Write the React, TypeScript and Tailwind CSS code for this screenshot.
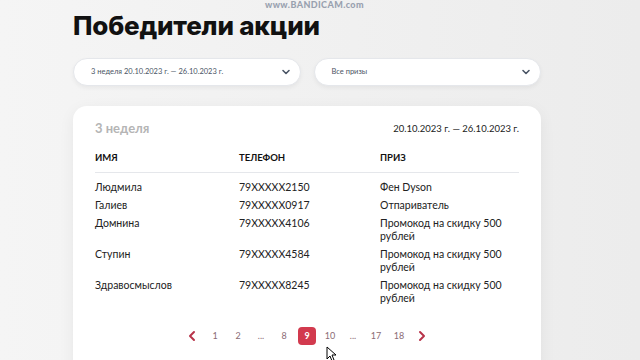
import React from "react";

const rows = [
  { name: "Людмила", phone: "79XXXXX2150", prize: "Фен Dyson" },
  { name: "Галиев", phone: "79XXXXX0917", prize: "Отпариватель" },
  { name: "Домнина", phone: "79XXXXX4106", prize: "Промокод на скидку 500 рублей" },
  { name: "Ступин", phone: "79XXXXX4584", prize: "Промокод на скидку 500 рублей" },
  { name: "Здравосмыслов", phone: "79XXXXX8245", prize: "Промокод на скидку 500 рублей" },
];

const pages = ["1", "2", "...", "8", "9", "10", "...", "17", "18"];

function Chevron() {
  return (
    <svg className="h-3 w-3 text-gray-600" viewBox="0 0 12 12" fill="none" stroke="currentColor" strokeWidth="1.6">
      <path d="M3 4.5l3 3 3-3" strokeLinecap="round" strokeLinejoin="round" />
    </svg>
  );
}

function Select({ label }: { label: string }) {
  return (
    <div className="flex h-[28px] flex-1 items-center justify-between rounded-full border border-gray-200 bg-white pl-[17px] pr-[8px] shadow-[0_2px_4px_rgba(0,0,0,0.05)]">
      <span className="text-[7.5px] text-gray-600">{label}</span>
      <Chevron />
    </div>
  );
}

export default function App() {
  return (
    <main
      className="relative h-[360px] w-[640px] overflow-hidden bg-[#f3f3f3] bg-gradient-to-r from-[#f5f5f5] to-[#ececec]"
      style={{ fontFamily: "Lato, 'Noto Sans', sans-serif" }}
    >
      <div className="absolute left-[265px] top-[-1px] text-[9px] font-black leading-[11px] tracking-[0.4px] text-gray-400">
        www.BANDICAM.com
      </div>

      <div className="ml-[73px] w-[468px] pt-[14px]">
        <h1
          className="text-[26px] font-extrabold leading-[24px] tracking-[-0.2px] text-[#111]"
          style={{ fontFamily: "Inter, 'Noto Sans', sans-serif" }}
        >
          Победители акции
        </h1>

        <div className="mt-[20px] flex gap-[13px]">
          <Select label="3 неделя 20.10.2023 г. — 26.10.2023 г." />
          <Select label="Все призы" />
        </div>

        <div className="mt-[20px] h-[300px] rounded-[14px] bg-white px-[22px] pt-[13px] shadow-[0_4px_16px_rgba(0,0,0,0.06)]">
          <div className="flex items-center justify-between">
            <span className="text-[13px] font-bold text-[#b5b5b5]">3 неделя</span>
            <span className="text-[9.5px] text-[#222]">20.10.2023 г. — 26.10.2023 г.</span>
          </div>

          <div className="mt-[12px] flex border-b border-gray-200 pb-[7px] text-[9.5px] font-bold text-[#111]">
            <div className="w-[144px]">ИМЯ</div>
            <div className="w-[141px]">ТЕЛЕФОН</div>
            <div>ПРИЗ</div>
          </div>

          <div className="mt-[8px] flex flex-col gap-[5px] text-[10.5px] leading-[13px] text-[#222]">
            {rows.map((r, i) => (
              <div key={i} className="flex">
                <div className="w-[144px]">{r.name}</div>
                <div className="w-[141px]">{r.phone}</div>
                <div className="w-[128px]">{r.prize}</div>
              </div>
            ))}
          </div>

          <div className="mt-[22px] flex items-center justify-center gap-[5px] text-[9px] text-[#8a6b75]">
            <svg className="h-[18px] w-[18px] text-[#b8344a]" viewBox="0 0 18 18" fill="none" stroke="currentColor" strokeWidth="2">
              <path d="M11 5l-4 4 4 4" strokeLinecap="round" strokeLinejoin="round" />
            </svg>
            {pages.map((p, i) =>
              p === "9" ? (
                <div key={i} className="flex h-[18px] w-[18px] items-center justify-center rounded-[4px] bg-[#d23a4e] font-bold text-white">
                  {p}
                </div>
              ) : (
                <div key={i} className="flex h-[18px] w-[18px] items-center justify-center">
                  {p}
                </div>
              )
            )}
            <svg className="h-[18px] w-[18px] text-[#b8344a]" viewBox="0 0 18 18" fill="none" stroke="currentColor" strokeWidth="2">
              <path d="M7 5l4 4-4 4" strokeLinecap="round" strokeLinejoin="round" />
            </svg>
          </div>
        </div>
      </div>

      <svg className="absolute left-[326px] top-[346px] h-[16px] w-[12px]" viewBox="0 0 12 16">
        <path d="M1 1v12l3-3 2 5 2-1-2-5h4z" fill="white" stroke="black" strokeWidth="1" />
      </svg>
    </main>
  );
}
